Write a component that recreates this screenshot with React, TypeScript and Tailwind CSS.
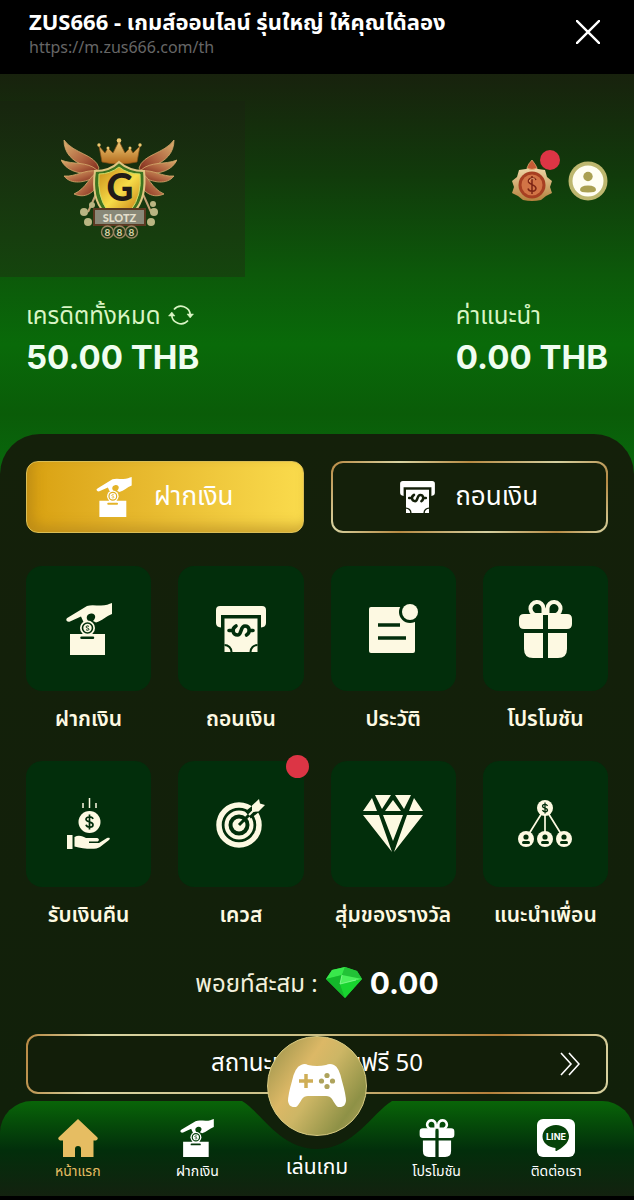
import type { ReactNode } from "react";
import clsx from "clsx";

interface IconProps {
  className?: string;
  /** Colour of the details knocked out of the solid shape. */
  cut?: string;
}

const TILE = "#022e0b";

function DepositIcon({ className, cut = TILE }: IconProps) {
  return (
    <svg viewBox="0 0 46 52" className={className} fill="currentColor" aria-hidden>
      <path d="M46 0V11C40 13 36 18 30 19.500L27 18C31 14 29 10 25 10.500C22 11 20 13 21 16L22.500 19H17.500L15 13.500L4 18.500C1 19.500-1.500 16.500 2 14.500L21 3C25 1.500 30 2.500 35 2.500C40 2.500 43 1 46 0Z" />
      <path fillRule="evenodd" d="M4 31H39V52H4ZM15.500 33.500A1.200 1.200 0 0 0 15.500 36H27A1.200 1.200 0 0 0 27 33.500Z" />
      <circle cx="21.500" cy="25" r="7.500" />
      <circle cx="21.500" cy="25" r="5" fill="none" stroke={cut} strokeWidth="1.600" />
      <path d="M23 23.500C22 22.500 20 22.800 20 24C20 25.300 23 24.800 23 26.200C23 27.400 21 27.600 20 26.600" fill="none" stroke={cut} strokeWidth="1" />
    </svg>
  );
}

function WithdrawIcon({ className, cut = TILE }: IconProps) {
  return (
    <svg viewBox="0 0 50 46" className={className} fill="currentColor" aria-hidden>
      <path d="M4 0H46Q50 0 50 4V17Q50 21 45 21.500V9H5V21.500Q0 21 0 17V4Q0 0 4 0Z" />
      <path d="M8.500 12.500H41.500V46H8.500Z" />
      <path d="M8.500 39A7 7 0 0 1 15.500 46M41.500 39A7 7 0 0 0 34.500 46" fill="none" stroke={cut} strokeWidth="2" />
      <path d="M13 24.500H17M33 24.500H37M20 20C15 23 17 29 21.500 29C26 29 24 20 29 20C33.500 20 35 26 30.500 29" fill="none" stroke={cut} strokeWidth="3.600" strokeLinecap="round" />
    </svg>
  );
}

function HistoryIcon({ className, cut = TILE }: IconProps) {
  return (
    <svg viewBox="0 0 49 49" className={className} fill="currentColor" aria-hidden>
      <rect y="3" width="46" height="46" rx="2" />
      <circle cx="41" cy="8" r="11" fill={cut} />
      <circle cx="41" cy="8" r="8" />
      <path d="M9 21H31M9 34H37" stroke={cut} strokeWidth="3.500" />
    </svg>
  );
}

function GiftIcon({ className }: IconProps) {
  return (
    <svg viewBox="0 0 53 58" className={className} fill="currentColor" aria-hidden>
      <path d="M24 15H19A6.500 6.500 0 1 1 24.500 8.500V15M29 15H34A6.500 6.500 0 1 0 28.500 8.500V15" fill="none" stroke="currentColor" strokeWidth="4" />
      <path d="M5 14H24V29H5Q0 29 0 24V19Q0 14 5 14ZM29 14H48Q53 14 53 19V24Q53 29 48 29H29Z" />
      <path d="M5 33H24V58H14Q5 58 5 49ZM29 33H48V49Q48 58 39 58H29Z" />
    </svg>
  );
}

function CashbackIcon({ className, cut = TILE }: IconProps) {
  return (
    <svg viewBox="0 0 43 51" className={className} fill="currentColor" aria-hidden>
      <path d="M16 5V10M22.500 0V10M29 5V10" stroke="currentColor" strokeWidth="1.500" />
      <circle cx="22.500" cy="24" r="11" />
      <path d="M26 21C25 18 19 18.500 19 21.300C19 24.500 26 23.300 26 26.700C26 29.800 20 30 19 26.800M22.500 16.500V31.500" fill="none" stroke={cut} strokeWidth="1.700" />
      <rect y="37" width="5.500" height="14" />
      <path d="M7.500 39C12 36.500 16 38.500 19 40H30C33 40.500 32 43.500 30 43.500H22V45H32L40 40C43 39 43.500 40.500 42 42L33 49C29 52 17 51 7.500 48.500Z" />
    </svg>
  );
}

function QuestIcon({ className, cut = TILE }: IconProps) {
  return (
    <svg viewBox="0 0 49 49" className={className} fill="none" aria-hidden>
      <circle cx="23" cy="26" r="20" stroke="currentColor" strokeWidth="5.500" />
      <circle cx="23" cy="26" r="12.500" stroke="currentColor" strokeWidth="4" />
      <circle cx="23" cy="26" r="6.500" fill="currentColor" />
      <path d="M32 16L42 8" stroke={cut} strokeWidth="9" />
      <path d="M23 26L36 13" stroke={cut} strokeWidth="3" />
      <path d="M33 16L39 10" stroke="currentColor" strokeWidth="2" />
      <path d="M36 13V6.500L43 0L44 4.500L49 6L42.500 12.500Z" fill="currentColor" />
    </svg>
  );
}

function DiamondIcon({ className }: IconProps) {
  return (
    <svg viewBox="0 0 60 57" className={className} fill="currentColor" aria-hidden>
      <path d="M12 0H28L19 14ZM32 0H48L41 14ZM9 3L14 16H0ZM51 3L60 16H46ZM30 5L38 16H22ZM0 20H16L29 57ZM20 20H40L30 46ZM44 20H60L31 57Z" />
    </svg>
  );
}

function ReferIcon({ className, cut = TILE }: IconProps) {
  return (
    <svg viewBox="0 0 54 48" className={className} fill="currentColor" aria-hidden>
      <path d="M27 8L9 37M27 8V37M27 8L45 37" stroke="currentColor" strokeWidth="1.700" />
      <circle cx="27" cy="8" r="8" />
      <path d="M29.500 6C28.500 3.500 24.500 4 24.500 6.200C24.500 8.500 29.500 7.500 29.500 10C29.500 12.300 25.500 12.500 24.500 10M27 2.500V13.500" fill="none" stroke={cut} strokeWidth="1.300" />
      {[8, 27, 46].map((cx) => (
        <g key={cx}>
          <circle cx={cx} cy="39" r="8" />
          <circle cx={cx} cy="37" r="2.600" fill={cut} />
          <rect x={cx - 4} y="41" width="8" height="3" rx="1.500" fill={cut} />
        </g>
      ))}
    </svg>
  );
}

function HomeIcon({ className }: IconProps) {
  return (
    <svg viewBox="0 0 40 38" className={className} fill="currentColor" aria-hidden>
      <path d="M20 0L39 18Q41 20 38 21.500H35.500V38H23V30Q23 27 20 27Q17 27 17 30V38H5V21.500H2Q-1 20 1 18Z" />
    </svg>
  );
}

function LineIcon({ className }: IconProps) {
  return (
    <svg viewBox="0 0 38 38" className={className} aria-hidden>
      <rect width="38" height="38" rx="6" fill="currentColor" />
      <path d="M19 6C26.500 6 32 11 32 17.500C32 24 25 29 19.500 32C18 32.500 18.500 31 18.500 29C11 28.500 5.500 23.500 5.500 17.500C5.500 11 11.500 6 19 6Z" fill="#054208" />
      <text x="19" y="21" textAnchor="middle" fontSize="9" className="fill-white font-['Inter',sans-serif] font-bold">
        LINE
      </text>
    </svg>
  );
}

function GamepadIcon({ className }: IconProps) {
  return (
    <svg viewBox="0 0 58 43" className={className} aria-hidden>
      <path d="M13 1Q17-1 20 1Q29 3 38 1Q42-1 46 1Q51 3 54 17Q58 31 58 37Q57 44 50 43Q48 42 44 35Q42 32 38 32H20Q16 32 14 35Q10 42 8 43Q1 44 0 37Q0 31 4 17Q7 3 13 1Z" fill="#fff" />
      <path d="M18 10V24M11 17H25" stroke="#cfae57" strokeWidth="3.500" />
      <g fill="#aea35c">
        <circle cx="39" cy="11.500" r="2.600" />
        <circle cx="39" cy="22.500" r="2.600" />
        <circle cx="33.500" cy="17" r="2.600" />
        <circle cx="44.500" cy="17" r="2.600" />
      </g>
    </svg>
  );
}

function EmeraldIcon({ className }: IconProps) {
  return (
    <svg viewBox="0 0 36 31" className={className} aria-hidden>
      <path d="M6 3L19 0L31 4L36 12L19 31L0 12Z" fill="#20cf35" />
      <path d="M6 3L19 0L16 8L0 12Z" fill="#39e84c" />
      <path d="M19 0L31 4L36 12L16 8Z" fill="#22c237" />
      <path d="M0 12L16 8L14 16L19 31Z" fill="#14b82b" />
      <path d="M16 8L36 12L14 17Z" fill="#4cf05c" />
      <path d="M14 17L36 12L19 31Z" fill="#18d52f" />
      <path d="M16 8L14 17L30 13" fill="none" stroke="#8dfb95" strokeWidth=".8" />
    </svg>
  );
}

function RefreshIcon({ className }: IconProps) {
  return (
    <svg viewBox="0 0 26 22" className={className} fill="none" stroke="currentColor" strokeWidth="1.700" aria-hidden>
      <path d="M6 5.500A9.300 9.300 0 0 1 22.300 11M20 16.500A9.300 9.300 0 0 1 3.700 11" />
      <path d="M19 10H25.500L22.200 14ZM.5 12H7L3.800 8Z" fill="currentColor" strokeWidth=".5" />
    </svg>
  );
}

function RewardIcon({ className }: IconProps) {
  return (
    <svg viewBox="0 0 40 41" className={className} aria-hidden>
      <defs>
        <linearGradient id="reward" x1="0" y1="0" x2="0" y2="1">
          <stop offset="0" stopColor="#f4ddb0" />
          <stop offset="1" stopColor="#b4803c" />
        </linearGradient>
      </defs>
      <path d="M20 5L26 9L33 10L35 17L40 21L38 27L40 33L34 36L29 40Q20 42 11 40L6 36L0 33L2 27L0 21L5 17L7 10L14 9Z" fill="url(#reward)" />
      <path d="M20 0Q24 5 25 8Q20 11 15 8Q16 4 20 0Z" fill="#c45b35" stroke="#e6ad72" strokeWidth=".7" />
      <circle cx="20" cy="25" r="13.500" fill="#a73f22" />
      <circle cx="20" cy="25" r="10.500" fill="#d27446" />
      <path d="M24 20C22 16.500 15.500 18 16.500 22C17.500 25 24 24.500 24 28.500C23.500 32.500 17 32 16 28.500M20 16V34" fill="none" stroke="#7c2414" strokeWidth="1.500" />
      <path d="M23 19.500C21 17.500 17 19 17.500 21.500" fill="none" stroke="#f3ba86" strokeWidth=".9" />
    </svg>
  );
}

function ProfileIcon({ className }: IconProps) {
  return (
    <svg viewBox="0 0 40 40" className={className} aria-hidden>
      <circle cx="20" cy="20" r="19.500" fill="#bdb76f" />
      <circle cx="20" cy="20" r="15.500" fill="#fffef2" />
      <circle cx="20" cy="15.500" r="4.700" fill="#aaa052" />
      <path d="M12 29Q12 24.500 20 24.500T28 29Q28 31.500 20 31.500T12 29Z" fill="#aaa052" />
    </svg>
  );
}

function Wing() {
  return (
    <g fill="url(#wing)" stroke="#d7ab6c" strokeWidth=".8">
      <path d="M38 30C34 16 13 16 3 2C3 15 11 23 24 28L35 35Z" />
      <path d="M36 32C26 23 12 27 0 22C5 32 15 36 34 36Z" />
      <path d="M36 33C24 31 15 39 3 38C10 47 24 45 36 38Z" />
      <path d="M37 34C28 38 26 50 13 56C24 61 34 55 38 43Z" />
    </g>
  );
}

function Logo({ className }: IconProps) {
  return (
    <svg viewBox="0 0 116 102" className={className} role="img" aria-label="G Slotz 888">
      <defs>
        <linearGradient id="wing" x1="0" y1="0" x2="1" y2="1">
          <stop offset="0" stopColor="#dcb06e" />
          <stop offset=".55" stopColor="#b06440" />
          <stop offset="1" stopColor="#7b2519" />
        </linearGradient>
        <linearGradient id="shield" x1="0" y1="0" x2="1" y2="1">
          <stop offset="0" stopColor="#c98b17" />
          <stop offset=".55" stopColor="#f6dc48" />
          <stop offset="1" stopColor="#c88017" />
        </linearGradient>
        <linearGradient id="crown" x1="0" y1="0" x2="0" y2="1">
          <stop offset="0" stopColor="#f0cd78" />
          <stop offset="1" stopColor="#b36a1c" />
        </linearGradient>
      </defs>
      <Wing />
      <g transform="translate(116 0) scale(-1 1)">
        <Wing />
      </g>
      <path d="M38 8L44 15L47 10L52 15L58 3L64 15L69 10L72 15L79 8L76 24Q58 28 41 24Z" fill="url(#crown)" stroke="#8c5118" strokeWidth=".7" />
      <g fill="#edc770">
        <circle cx="58" cy="2.500" r="2.300" />
        <circle cx="38" cy="7" r="1.700" />
        <circle cx="79" cy="7" r="1.700" />
        <circle cx="47" cy="10" r="1.500" />
        <circle cx="69" cy="10" r="1.500" />
      </g>
      <path d="M36 54L27 74M81 54L90 74" stroke="#c2a175" strokeWidth="2" />
      <g fill="#b9b582">
        <circle cx="23" cy="74" r="4" />
        <circle cx="31" cy="67" r="3" />
        <circle cx="27" cy="84" r="4" />
        <circle cx="93" cy="74" r="4" />
        <circle cx="92" cy="66" r="3" />
        <circle cx="90" cy="84" r="4" />
      </g>
      <path d="M58 24Q68 33 83 33Q86 60 73 74H43Q30 60 34 33Q49 33 58 24Z" fill="#3d731f" stroke="#e0c681" strokeWidth="2" />
      <path d="M58 29Q67 36 79 36Q81 58 70 72H46Q36 58 38 36Q49 36 58 29Z" fill="url(#shield)" stroke="#cedb65" strokeWidth="1" />
      <text x="59" y="63" textAnchor="middle" fontSize="37" className="fill-[#211a18] font-['Lato',sans-serif] font-black">
        G
      </text>
      <rect x="33" y="71" width="51" height="16" fill="#888878" stroke="#5b3921" strokeWidth="2" />
      <text x="58.500" y="83.500" textAnchor="middle" fontSize="11" className="fill-[#e3dfcb] font-['Lato',sans-serif] font-black">
        SLOTZ
      </text>
      {[46.5, 58.5, 70.5].map((cx) => (
        <g key={cx}>
          <circle cx={cx} cy="94" r="6" fill="#203b17" stroke="#9b8561" strokeWidth="1.400" />
          <text x={cx} y="97.500" textAnchor="middle" fontSize="10" className="fill-[#d7d2a5] font-['Lato',sans-serif] font-bold">
            8
          </text>
        </g>
      ))}
    </svg>
  );
}

const MENU: { label: string; icon: ReactNode; dot?: boolean }[] = [
  { label: "ฝากเงิน", icon: <DepositIcon className="h-[52px] w-[46px]" /> },
  { label: "ถอนเงิน", icon: <WithdrawIcon className="h-[46px] w-[50px]" /> },
  { label: "ประวัติ", icon: <HistoryIcon className="size-[49px]" /> },
  { label: "โปรโมชัน", icon: <GiftIcon className="h-[58px] w-[53px]" /> },
  { label: "รับเงินคืน", icon: <CashbackIcon className="h-[51px] w-[43px]" /> },
  { label: "เควส", icon: <QuestIcon className="size-[49px]" />, dot: true },
  { label: "สุ่มของรางวัล", icon: <DiamondIcon className="h-[57px] w-[60px]" /> },
  { label: "แนะนำเพื่อน", icon: <ReferIcon className="h-[48px] w-[54px]" /> },
];

function NavItem({ label, icon, active }: { label: string; icon: ReactNode; active?: boolean }) {
  return (
    <a href="#" className={clsx("flex flex-col items-center gap-1 pt-[18px]", active ? "text-[#e6bd62]" : "text-white")}>
      {icon}
      <span className="text-[14px] leading-5">{label}</span>
    </a>
  );
}

export default function App() {
  return (
    <div className="flex min-h-screen flex-col bg-black font-['Noto_Sans','Noto_Sans_Thai',sans-serif] text-white">
      <header className="flex h-[74px] items-start justify-between pl-[29px] pr-[34px]">
        <div className="pt-[7px]">
          <h1 className="text-[22px] font-bold leading-7">ZUS666 - เกมส์ออนไลน์ รุ่นใหญ่ ให้คุณได้ลอง</h1>
          <p className="text-[16px] leading-6 text-[#666]">https://m.zus666.com/th</p>
        </div>
        <button type="button" aria-label="ปิด" className="mt-5">
          <svg viewBox="0 0 24 24" className="size-6" stroke="currentColor" strokeWidth="2.400" aria-hidden>
            <path d="M0 0L24 24M24 0L0 24" />
          </svg>
        </button>
      </header>

      <div className="bg-[linear-gradient(to_bottom,#18220d_0px,#113a0b_100px,#0c590a_200px,#096a09_270px,#0a5c08_340px,#087010_430px)]">
        <section className="flex h-[360px] flex-col pt-[27px]">
          <div className="flex items-start justify-between pr-[26px]">
            <div className="flex h-[176px] w-[245px] items-center justify-center bg-linear-to-b from-[#17250e] to-[#14450d] pr-2">
              <Logo className="h-[102px] w-[116px]" />
            </div>
            <div className="flex items-center gap-4 pt-[59px]">
              <button type="button" aria-label="รางวัล" className="relative">
                <RewardIcon className="h-[41px] w-[40px]" />
                <span className="absolute -right-2 -top-[10px] size-5 rounded-full bg-[#dc3545]" />
              </button>
              <button type="button" aria-label="โปรไฟล์">
                <ProfileIcon className="size-10" />
              </button>
            </div>
          </div>
          <div className="flex justify-between px-[26px] pt-5">
            <div>
              <div className="flex items-center gap-2 text-[#d9f5c4]">
                <span className="text-[24px] leading-9">เครดิตทั้งหมด</span>
                <button type="button" aria-label="รีเฟรช">
                  <RefreshIcon className="h-[22px] w-[26px]" />
                </button>
              </div>
              <p className="font-['Inter',sans-serif] text-[33px] font-bold leading-12 text-[#f0fdf0]">50.00 THB</p>
            </div>
            <div>
              <p className="text-[24px] leading-9 text-[#d9f5c4]">ค่าแนะนำ</p>
              <p className="font-['Inter',sans-serif] text-[33px] font-bold leading-12 text-[#f0fdf0]">0.00 THB</p>
            </div>
          </div>
        </section>

        <main className="rounded-t-[40px] bg-linear-to-b from-[#14200a] to-[#11200a] px-[26px] pb-[7px] pt-[27px]">
          <div className="grid grid-cols-2 gap-[27px]">
            <button
              type="button"
              className="flex h-[72px] items-center justify-center gap-[22px] rounded-xl border border-[#d9bd55] bg-linear-to-r from-[#d9a10f] to-[#fadb4c] shadow-[inset_6px_-6px_12px_#a87b1c80]"
            >
              <DepositIcon className="h-[40px] w-[36px]" cut="#e0ae20" />
              <span className="pb-1 text-[26px] leading-9">ฝากเงิน</span>
            </button>
            <button
              type="button"
              className="flex h-[72px] items-center justify-center gap-[20px] rounded-xl border-2 border-transparent [background:linear-gradient(#14200a,#14200a)_padding-box,linear-gradient(135deg,#b98943,#d8d4a2_20%,#b68a43_40%,#d4d0a0_65%,#b68b45_85%,#d8d4a2)_border-box]"
            >
              <WithdrawIcon className="h-[32px] w-[35px]" cut="#14200a" />
              <span className="pb-1 text-[26px] leading-9">ถอนเงิน</span>
            </button>
          </div>

          <div className="mt-[33px] grid grid-cols-4 gap-[27px]">
            {MENU.map((item) => (
              <a key={item.label} href="#" className="relative flex flex-col items-center text-[#fdf9e2]">
                <span className="flex aspect-square w-full items-center justify-center rounded-2xl bg-[#022e0b]">{item.icon}</span>
                <span className="mt-[11px] whitespace-nowrap text-[21px] font-semibold leading-8">{item.label}</span>
                {item.dot && <span className="absolute -top-[6px] right-[-5px] size-[23px] rounded-full bg-[#dc3545]" />}
              </a>
            ))}
          </div>

          <div className="mt-[33px] flex h-10 items-center justify-center gap-2">
            <span className="text-[24px] leading-9 text-[#f2f0dd]">พอยท์สะสม :</span>
            <EmeraldIcon className="h-[31px] w-[36px]" />
            <span className="font-['Inter',sans-serif] text-[30px] font-bold leading-9">0.00</span>
          </div>

          <button
            type="button"
            className="relative mt-[31px] flex h-[60px] w-full items-center justify-center rounded-xl border-2 border-transparent [background:linear-gradient(#121e09,#121e09)_padding-box,linear-gradient(100deg,#b98943,#d8d4a2_12%,#c9bd83_50%,#b5803a_80%,#d8d4a2)_border-box]"
          >
            <span className="pb-1 text-[24px] leading-9">สถานะเครดิตรับฟรี 50</span>
            <svg viewBox="0 0 20 24" className="absolute right-[26px] h-6 w-5" fill="none" stroke="currentColor" strokeWidth="1.600" aria-hidden>
              <path d="M1 1L11 12L1 23M9 1L19 12L9 23" />
            </svg>
          </button>
        </main>
      </div>

      <div className="bg-[#11200a]">
        <nav className="relative grid h-[95px] grid-cols-5 rounded-t-[32px] bg-[linear-gradient(to_bottom,#096508_0%,#054a09_25%,#022e0b_52%,#13220f_100%)] px-[18px]">
          <svg viewBox="0 0 150 48" className="absolute left-1/2 top-0 h-12 w-[150px] -translate-x-1/2" fill="#11200a" aria-hidden>
            <path d="M0 0C20 12 38 48 75 48C112 48 130 12 150 0Z" />
          </svg>
          <NavItem label="หน้าแรก" icon={<HomeIcon className="h-[38px] w-[40px]" />} active />
          <NavItem label="ฝากเงิน" icon={<DepositIcon className="h-[38px] w-[34px]" cut="#04400a" />} />
          <a href="#" className="relative flex justify-center">
            <span className="absolute -top-[65px] flex size-[100px] items-center justify-center rounded-full border border-[#d7ca82] bg-[linear-gradient(125deg,#a79a50_10%,#dcb866_35%,#cdb665_50%,#8e9146_80%,#b1a45c)]">
              <GamepadIcon className="h-[43px] w-[58px]" />
            </span>
            <span className="mt-[49px] text-[21px] leading-8">เล่นเกม</span>
          </a>
          <NavItem label="โปรโมชัน" icon={<GiftIcon className="h-[38px] w-[36px]" />} />
          <NavItem label="ติดต่อเรา" icon={<LineIcon className="size-[38px]" />} />
        </nav>
      </div>
    </div>
  );
}
